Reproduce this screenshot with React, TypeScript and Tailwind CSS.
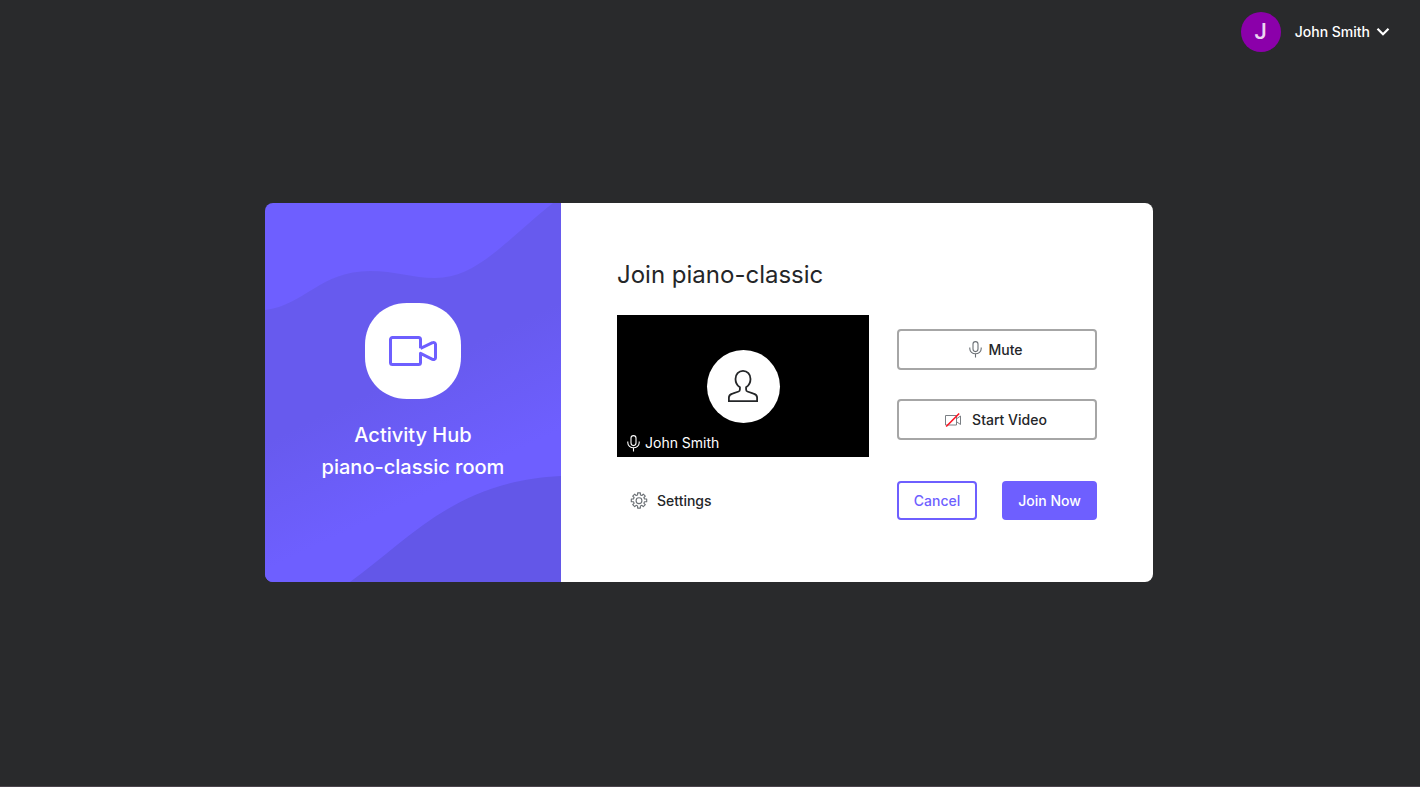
import type { ReactNode } from "react";

function MicIcon({ className }: { className: string }) {
  return (
    <svg viewBox="0 0 13 17" fill="none" stroke="currentColor" strokeWidth="1.1" className={className} aria-hidden="true">
      <rect x="4" y="0.6" width="5" height="10" rx="2.5" />
      <path d="M0.8 6.5v1.3a5.7 5 0 0 0 11.4 0V6.5M6.5 12.8V16.5" />
    </svg>
  );
}

function CameraOffIcon() {
  return (
    <svg viewBox="0 0 17 14" fill="none" className="h-[14px] w-[17px]" aria-hidden="true">
      <path d="M0.5 2.5h11v9.5h-11zM11.5 5.8l4-2.8v8.5l-4-2.8" stroke="#7a7f84" />
      <path d="M1.2 13.5L14.2 0.5" stroke="#ff1020" strokeWidth="1.5" />
    </svg>
  );
}

function CameraIcon() {
  return (
    <svg viewBox="0 0 48 30" fill="none" stroke="#6e5fff" strokeWidth="3" strokeLinejoin="round" className="h-[30px] w-12" aria-hidden="true">
      <path d="M31.5 12.3V3.5a2 2 0 0 0-2-2h-26a2 2 0 0 0-2 2v23a2 2 0 0 0 2 2h26a2 2 0 0 0 2-2V17.3L43.5 23.3a2 2 0 0 0 3-1.8v-13a2 2 0 0 0-3-1.8L31.5 12.3" />
    </svg>
  );
}

function PersonIcon() {
  return (
    <svg viewBox="0 0 30 32" fill="none" stroke="#242628" strokeWidth="1.8" className="h-8 w-[30px]" aria-hidden="true">
      <path d="M0.9 31.1V27.5C0.9 25.2 2.2 24.3 4.5 23.6L10.6 21.5Q11.9 21 11.9 19.5V17.3C9 15.3 7.5 12.2 7.5 8.9C7.5 4.2 10.7 0.9 15 0.9S22.5 4.2 22.5 8.9C22.5 12.2 21 15.3 18.1 17.3V19.5Q18.1 21 19.4 21.5L25.5 23.6C27.8 24.3 29.1 25.2 29.1 27.5V31.1Z" />
    </svg>
  );
}

function GearIcon() {
  return (
    <svg viewBox="0 0 18 18" fill="none" stroke="#6b7075" strokeWidth="1.1" strokeLinejoin="round" className="size-[18px]" aria-hidden="true">
      <path d="M7.6 0.9h2.8v2l1.5 0.6 1.4-1.4 2 2-1.4 1.4 0.6 1.5h2.2v2.8h-2.2l-0.6 1.5 1.4 1.4-2 2-1.4-1.4-1.5 0.6v2.2H7.6v-2.2l-1.5-0.6-1.4 1.4-2-2 1.4-1.4-0.6-1.5H1.3V7h2.2l0.6-1.5-1.4-1.4 2-2 1.4 1.4 1.5-0.6z" />
      <circle cx="9" cy="8.7" r="2.9" />
    </svg>
  );
}

function Waves() {
  return (
    <svg viewBox="0 0 296 379" preserveAspectRatio="none" className="absolute inset-0 size-full" aria-hidden="true">
      <defs>
        <linearGradient id="wave" gradientUnits="userSpaceOnUse" x1="92" y1="195" x2="142" y2="300">
          <stop offset="0" stopColor="#675aee" />
          <stop offset="1" stopColor="#6e5fff" />
        </linearGradient>
      </defs>
      <path d="M0 107C40 102 55 68 105 68C130 68 148 75 170 75C212 75 240 38 288 0H296V379H0Z" fill="url(#wave)" />
      <path d="M85 379C145 336 190 278 296 273V379Z" fill="#6357e8" />
    </svg>
  );
}

function OptionButton({ children, gap }: { children: ReactNode; gap: string }) {
  return (
    <button type="button" className={`flex h-[41px] w-full items-center justify-center rounded border-2 border-[#a6a6a6] bg-white pr-[2px] text-[#242628] ${gap}`}>
      {children}
    </button>
  );
}

export default function App() {
  return (
    <div className="flex min-h-screen flex-col border-b border-[#4a434b] bg-[#292a2c] font-['Inter',sans-serif] text-sm font-medium">
      <header className="flex h-16 items-center justify-end px-[30px]">
        <button type="button" className="flex items-center text-white">
          <span className="mr-[14px] flex size-10 items-center justify-center rounded-full bg-[#8b00aa] font-['Roboto',sans-serif] text-[22px] font-medium text-[#ecd6f1]">J</span>
          <span>John Smith</span>
          <svg viewBox="0 0 14 10" fill="none" stroke="currentColor" strokeWidth="2.2" className="ml-[6px] h-[10px] w-[14px]" aria-hidden="true">
            <path d="M1.5 1.8L7 7.3L12.5 1.8" />
          </svg>
        </button>
      </header>

      <main className="flex flex-1 items-center justify-center pr-[2px] pb-[65px]">
        <div className="grid w-full max-w-[888px] grid-cols-[1fr_2fr]">
          <section className="relative flex flex-col items-center justify-center overflow-hidden rounded-l-lg bg-[#6e5fff] text-white">
            <Waves />
            <div className="relative flex flex-col items-center">
              <div className="relative flex size-24 items-center justify-center">
                <svg viewBox="0 0 96 96" fill="#fff" className="absolute inset-0 size-full" aria-hidden="true">
                  <path d="M42 0H54C78 0 96 18 96 42V54C96 78 78 96 54 96H42C18 96 0 78 0 54V42C0 18 18 0 42 0Z" />
                </svg>
                <div className="relative">
                  <CameraIcon />
                </div>
              </div>
              <p className="mt-5 text-center text-xl leading-8">
                Activity Hub
                <br />
                piano-classic room
              </p>
            </div>
          </section>

          <section className="rounded-r-lg bg-white px-14 pt-14 pb-[62px]">
            <h1 className="text-2xl leading-8 font-normal text-[#242628]">Join piano-classic</h1>
            <div className="mt-6 flex gap-7">
              <div className="relative flex h-[142px] flex-1 items-center justify-center bg-black">
                <div className="flex size-[73px] items-center justify-center rounded-full bg-white">
                  <PersonIcon />
                </div>
                <div className="absolute bottom-1 left-[10px] flex items-center gap-[5px] font-normal text-white">
                  <MicIcon className="h-[17px] w-[13px]" />
                  John Smith
                </div>
              </div>
              <div className="flex w-[200px] flex-col gap-[29px] pt-[14px]">
                <OptionButton gap="gap-[6px]">
                  <MicIcon className="h-[17px] w-[13px] text-[#6b7075]" />
                  Mute
                </OptionButton>
                <OptionButton gap="gap-[10px]">
                  <CameraOffIcon />
                  Start Video
                </OptionButton>
              </div>
            </div>
            <div className="mt-6 flex items-center justify-between">
              <button type="button" className="ml-[13px] flex items-center gap-[9px] text-[#242628]">
                <GearIcon />
                Settings
              </button>
              <div className="flex w-[200px] justify-between">
                <button type="button" className="h-[39px] w-20 rounded border-2 border-[#6e5fff] bg-white text-[#6e5fff]">Cancel</button>
                <button type="button" className="h-[39px] w-[95px] rounded bg-[#6e5fff] text-white">Join Now</button>
              </div>
            </div>
          </section>
        </div>
      </main>
    </div>
  );
}
